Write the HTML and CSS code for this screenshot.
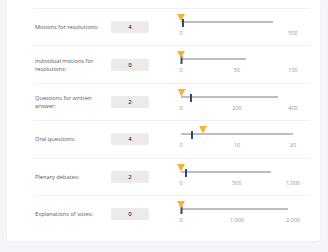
FILE: index.html
```html
<!DOCTYPE html>
<html>
<head>
<meta charset="utf-8">
<link rel="stylesheet" href="styles.css">
</head>
<body>
<div class="card">
  <div class="row">
    <div class="label">Motions for resolutions:</div>
    <div class="value">4</div>
    <svg class="chart" width="130" height="30" viewBox="0 0 130 30">
      <line class="max" x1="6" y1="9" x2="98" y2="9"/>
      <rect class="median" x="7" y="6" width="2" height="8"/>
      <polygon class="marker" points="2,1 10,1 6,8.5"/>
      <text x="6" y="22">0</text>
      <text x="118" y="22">500</text>
    </svg>
  </div>
  <div class="row">
    <div class="label">Individual motions for resolutions:</div>
    <div class="value">0</div>
    <svg class="chart" width="130" height="30" viewBox="0 0 130 30">
      <line class="max" x1="6" y1="9" x2="71" y2="9"/>
      <rect class="median" x="5.5" y="6" width="2" height="8"/>
      <polygon class="marker" points="2,1 10,1 6,8.5"/>
      <text x="6" y="22">0</text>
      <text x="62" y="22">50</text>
      <text x="118" y="22">100</text>
    </svg>
  </div>
  <div class="row">
    <div class="label">Questions for written answer:</div>
    <div class="value">2</div>
    <svg class="chart" width="130" height="30" viewBox="0 0 130 30">
      <line class="max" x1="6" y1="9" x2="103" y2="9"/>
      <rect class="median" x="15" y="6" width="2" height="8"/>
      <polygon class="marker" points="2.5,1 10.5,1 6.5,8.5"/>
      <text x="6" y="22">0</text>
      <text x="62" y="22">200</text>
      <text x="118" y="22">400</text>
    </svg>
  </div>
  <div class="row">
    <div class="label">Oral questions:</div>
    <div class="value">4</div>
    <svg class="chart" width="130" height="30" viewBox="0 0 130 30">
      <line class="max" x1="6" y1="9" x2="118" y2="9"/>
      <rect class="median" x="16" y="6" width="2" height="8"/>
      <polygon class="marker" points="24,1 32,1 28,8.5"/>
      <text x="6" y="22">0</text>
      <text x="62" y="22">10</text>
      <text x="118" y="22">20</text>
    </svg>
  </div>
  <div class="row">
    <div class="label">Plenary debates:</div>
    <div class="value">2</div>
    <svg class="chart" width="130" height="30" viewBox="0 0 130 30">
      <line class="max" x1="6" y1="9" x2="96" y2="9"/>
      <rect class="median" x="10" y="6" width="2" height="8"/>
      <polygon class="marker" points="2,1 10,1 6,8.5"/>
      <text x="6" y="22">0</text>
      <text x="62" y="22">500</text>
      <text x="118" y="22">1,000</text>
    </svg>
  </div>
  <div class="row">
    <div class="label">Explanations of votes:</div>
    <div class="value">0</div>
    <svg class="chart" width="130" height="30" viewBox="0 0 130 30">
      <line class="max" x1="6" y1="9" x2="113" y2="9"/>
      <rect class="median" x="5.5" y="6" width="2" height="8"/>
      <polygon class="marker" points="2,1 10,1 6,8.5"/>
      <text x="6" y="22">0</text>
      <text x="62" y="22">1,000</text>
      <text x="118" y="22">2,000</text>
    </svg>
  </div>
</div>
</body>
</html>
```

FILE: styles.css
```css
html, body {
  margin: 0;
  padding: 0;
}
body {
  background: #f3f5f9;
  font-family: "Open Sans", "Liberation Sans", sans-serif;
  width: 328px;
  height: 252px;
  overflow: hidden;
}
.card {
  margin-left: 7px;
  width: 313px;
  background: #ffffff;
  padding: 8px 0 8.6px 0;
  box-sizing: border-box;
  border-radius: 0 0 3px 3px;
  box-shadow: 0 1px 2px rgba(0, 0, 0, 0.04);
}
.row {
  margin: 0 10px 0 26px;
  height: 37.4px;
  box-sizing: border-box;
  border-top: 1px solid #eef0f3;
  display: grid;
  grid-template-columns: 76px 38px 26px 130px;
  padding-left: 2px;
  align-items: center;
}
.label {
  grid-column: 1;
  width: 64px;
  font-size: 5.7px;
  line-height: 8px;
  color: #555a60;
}
.value {
  grid-column: 2;
  height: 12px;
  background: #ebebeb;
  border-radius: 2px;
  font-size: 6px;
  line-height: 12px;
  text-align: center;
  font-weight: 600;
  color: #3a3a3a;
}
.chart {
  grid-column: 4;
  align-self: start;
  margin-top: 4px;
  display: block;
}
.chart .max {
  stroke: #a3a8ad;
  stroke-width: 1.5;
}
.chart .median {
  fill: #2e4c68;
}
.chart .marker {
  fill: #f2b337;
}
.chart text {
  font-family: "Open Sans", "Liberation Sans", sans-serif;
  font-size: 5.5px;
  fill: #8f9499;
  text-anchor: middle;
}
```
